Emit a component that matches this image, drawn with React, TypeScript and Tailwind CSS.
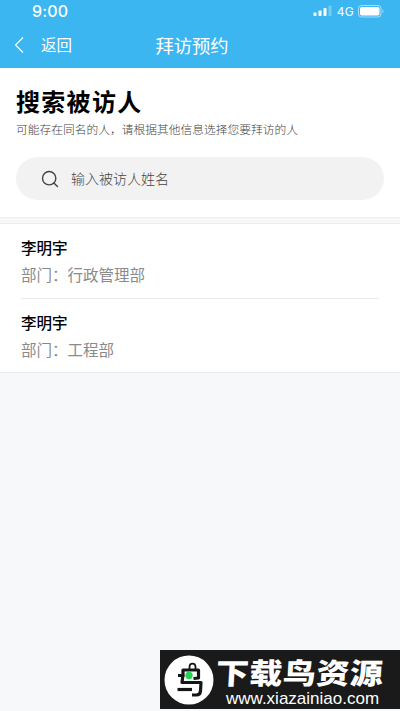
import { Search } from 'lucide-react';

const people = [
  { id: 1, name: '李明宇', department: '行政管理部' },
  { id: 2, name: '李明宇', department: '工程部' },
];

function StatusBar() {
  return (
    <div className="flex h-[22px] items-center justify-between pl-8 pr-[15px]">
      <span className="font-['Inter'] text-[16px] font-medium leading-[22px] tracking-[0.2px]">9:00</span>
      <div className="flex items-center">
        <svg width="19" height="12" viewBox="0 0 19 12" fill="currentColor">
          <rect x="0.5" y="7.5" width="3" height="3.5" rx="0.8" />
          <rect x="5.5" y="5.5" width="3" height="5.5" rx="0.8" />
          <rect x="10.5" y="3" width="3" height="8" rx="0.8" />
          <rect x="15.5" y="0.5" width="3" height="10.5" rx="0.8" opacity="0.3" />
        </svg>
        <span className="ml-[5px] mt-px font-['Inter'] text-[12px] leading-[22px] tracking-[0.3px]">4G</span>
        <svg className="ml-1" width="27" height="13" viewBox="0 0 27 13" fill="none">
          <rect x="0.5" y="0.5" width="22.5" height="11.5" rx="3" stroke="white" strokeOpacity="0.55" />
          <rect x="2" y="2" width="19.5" height="8.5" rx="1.8" fill="white" />
          <path d="M24.5 4.3v4c1.3-.5 1.3-3.5 0-4Z" fill="white" fillOpacity="0.6" />
        </svg>
      </div>
    </div>
  );
}

function SiteBanner() {
  return (
    <div className="absolute bottom-[2px] right-0 flex h-[59px] w-[240px] items-center bg-[#1a1a1a] pl-1 text-white">
      <svg className="shrink-0" width="50" height="50" viewBox="0 0 50 50" fill="none">
        <circle cx="25" cy="25" r="24.5" fill="white" />
        <g stroke="#151515" strokeWidth="3.2" strokeLinejoin="round">
          <path d="M25.5 14v-2c0-4.5 6-4.5 6 0v2" strokeWidth="1.8" />
          <path d="M29.5 23.5l5-.5v-8H19v5.5h-5" />
          <path d="M19 20l-1 7.5h19L36.5 36c-.3 3-1.5 4-4 4H28" />
          <path d="M13.5 34.5h14.5" />
        </g>
        <circle cx="25" cy="20.5" r="3.7" fill="#25d453" />
      </svg>
      <div className="ml-[2px] flex flex-col pt-[6px]">
        <span className="origin-left scale-y-[0.88] -skew-x-3 whitespace-nowrap text-[33px] font-black leading-[30px] tracking-[0.5px]">
          下载鸟资源
        </span>
        <span className="ml-[10px] mt-[2px] font-['Liberation_Sans'] text-[17px] leading-[20px]">
          www.xiazainiao.com
        </span>
      </div>
    </div>
  );
}

export default function App() {
  return (
    <div className="relative h-[711px] w-[400px] overflow-hidden bg-[#f7f8fa] font-['Noto_Sans_CJK_SC',sans-serif]">
      <header className="h-[68px] bg-[#3cb6f0] text-white">
        <StatusBar />
        <nav className="grid h-[46px] grid-cols-[1fr_auto_1fr] items-center">
          <div className="flex items-center pl-[14px]">
            <svg width="10" height="16" viewBox="0 0 10 16" fill="none" stroke="currentColor" strokeWidth="1.1">
              <path d="M9 0.5 1.5 8 9 15.5" />
            </svg>
            <span className="-mt-0.5 ml-[17px] text-[15.5px] leading-6">返回</span>
          </div>
          <h1 className="-translate-x-2 text-[18.3px] leading-7">拜访预约</h1>
        </nav>
      </header>

      <section className="h-[150px] border-b border-[#eceef0] bg-white px-4 pt-[18px]">
        <h2 className="text-[24px] font-bold leading-[30px] tracking-[1.3px] text-black">搜索被访人</h2>
        <p className="mt-[4px] text-[11.75px] font-light leading-[18px] text-[#444]">
          可能存在同名的人，请根据其他信息选择您要拜访的人
        </p>
        <label className="mt-[19px] flex h-[43px] items-center rounded-full bg-[#f2f2f2] pl-[24px]">
          <Search className="mt-px h-[20px] w-[20px] text-[#444]" strokeWidth={1.7} />
          <input
            type="text"
            placeholder="输入被访人姓名"
            className="ml-[11px] flex-1 bg-transparent text-[14px] font-light outline-none placeholder:text-[#444]"
          />
        </label>
      </section>

      <ul className="mt-[5px] border-y border-[#e9ebed] bg-white pl-[21px] pr-[21px]">
        {people.map((person) => (
          <li
            key={person.id}
            className="h-[75px] border-b border-[#ebebeb] pt-[11px] last:h-[73px] last:border-b-0"
          >
            <p className="text-[15.5px] font-medium leading-6 text-black">{person.name}</p>
            <p className="mt-[3px] text-[15.5px] leading-6 text-[#8a8a8a]">部门：{person.department}</p>
          </li>
        ))}
      </ul>

      <SiteBanner />
    </div>
  );
}
